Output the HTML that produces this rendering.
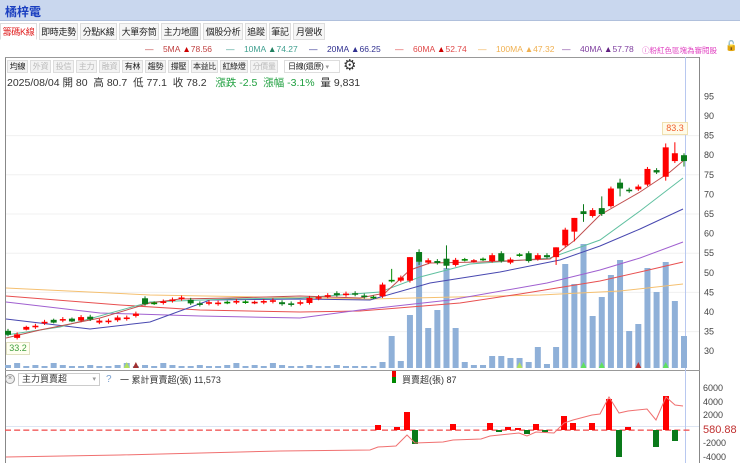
<!DOCTYPE html>
<html><head><meta charset="utf-8"><style>
*{margin:0;padding:0;box-sizing:border-box}
body{width:740px;height:463px;overflow:hidden;background:#fff;font-family:"Liberation Sans","Noto Sans CJK TC",sans-serif;position:relative;color:#333}
.a{position:absolute;white-space:nowrap}
#title{left:0;top:0;width:740px;height:21px;background:#c9d7ee;border-bottom:1px solid #b0c0dc}
#title span{position:absolute;left:5px;top:3px;font-size:12px;font-weight:bold;color:#1a3fc0}
.tab{position:absolute;top:23px;height:17px;font-size:9px;line-height:16px;text-align:center;background:#f6f6f6;border:1px solid #ddd;color:#222;white-space:nowrap;overflow:hidden;letter-spacing:-0.3px}
.btn{position:absolute;top:60px;height:13px;font-size:8px;line-height:11px;text-align:center;background:#f3f3f3;border:1px solid #ddd;color:#222;white-space:nowrap;overflow:hidden;letter-spacing:-0.3px}
.g{color:#bbb}
.leg{position:absolute;top:44px;font-size:8.5px;white-space:nowrap}
svg{position:absolute;left:0;top:0}
</style></head><body>
<div id="title" class="a"><span>橘梓電</span></div>
<div class="tab" style="left:0;width:37px;color:#e02020;background:#fff;border-bottom-color:#fff">籌碼K線</div>
<div class="tab" style="left:39px;width:39px">即時走勢</div>
<div class="tab" style="left:80px;width:37px">分點K線</div>
<div class="tab" style="left:119px;width:40px">大單夯筒</div>
<div class="tab" style="left:161px;width:40px">主力地圖</div>
<div class="tab" style="left:203px;width:40px">個股分析</div>
<div class="tab" style="left:245px;width:22px">追蹤</div>
<div class="tab" style="left:269px;width:22px">筆記</div>
<div class="tab" style="left:293px;width:32px">月營收</div>
<div class="leg" style="left:145px;color:#c04040">—&nbsp;&nbsp;&nbsp; 5MA <span style="color:#c00">▲</span>78.56</div>
<div class="leg" style="left:226px;color:#40a090">—&nbsp;&nbsp;&nbsp; 10MA <span style="color:#208060">▲</span>74.27</div>
<div class="leg" style="left:309px;color:#303090">—&nbsp;&nbsp;&nbsp; 20MA <span>▲</span>66.25</div>
<div class="leg" style="left:395px;color:#e04848">—&nbsp;&nbsp;&nbsp; 60MA <span style="color:#c00">▲</span>52.74</div>
<div class="leg" style="left:478px;color:#f0b050">—&nbsp;&nbsp;&nbsp; 100MA ▲47.32</div>
<div class="leg" style="left:562px;color:#8040a0">—&nbsp;&nbsp;&nbsp; 40MA <span style="color:#602080">▲</span>57.78</div>
<div class="leg" style="left:642px;color:#e040c0;font-size:7.5px;top:45px">ⓘ粉紅色區塊為審閱股</div>
<div class="leg" style="left:725px;top:41px;font-size:10px;color:#000">🔓</div>
<svg width="740" height="463" id="s"></svg>
<div class="btn" style="left:7px;width:21px">均線</div>
<div class="btn g" style="left:30px;width:21px">外資</div>
<div class="btn g" style="left:53px;width:21px">投信</div>
<div class="btn g" style="left:76px;width:21px">主力</div>
<div class="btn g" style="left:99px;width:21px">融資</div>
<div class="btn" style="left:122px;width:21px">有林</div>
<div class="btn" style="left:145px;width:21px">趨勢</div>
<div class="btn" style="left:168px;width:21px">撐壓</div>
<div class="btn" style="left:191px;width:27px">本益比</div>
<div class="btn" style="left:220px;width:28px">紅綠燈</div>
<div class="btn g" style="left:250px;width:28px">分價量</div>
<div class="btn" style="left:284px;width:56px;background:#fff;text-align:left;padding-left:3px">日線(還原) <span style="color:#999;font-size:7px">▾</span></div>
<div class="a" style="left:343px;top:56px;font-size:15px;color:#333">⚙</div>
<div class="a" style="left:7px;top:75px;font-size:10.5px;color:#333">2025/08/04 開 80 &nbsp;高 80.7 &nbsp;低 77.1 &nbsp;收 78.2 &nbsp; <span style="color:#20a040">漲跌 -2.5 &nbsp;漲幅 -3.1%</span> &nbsp;量 9,831</div>
<div class="a" style="left:662px;top:122px;width:26px;height:13px;border:1px solid #f0e0b0;background:#fffbe8;font-size:9px;color:#f06030;text-align:center;line-height:11px">83.3</div>
<div class="a" style="left:6px;top:342px;width:24px;height:13px;border:1px solid #e0e0c0;background:#fffff0;font-size:9px;color:#40a040;text-align:center;line-height:11px">33.2</div>
<div class="a" style="left:5px;top:374px;width:10px;height:10px;border:1px solid #999;border-radius:50%;font-size:7px;line-height:8px;text-align:center;color:#777;background:#eee">×</div>
<div class="a" style="left:18px;top:373px;width:82px;height:13px;border:1px solid #ccc;font-size:9px;line-height:11px;padding-left:3px">主力買賣超<span style="position:absolute;right:3px;color:#999;font-size:7px">▾</span></div>
<div class="a" style="left:106px;top:374px;font-size:10px;color:#7aa0d0">?</div>
<div class="a" style="left:120px;top:373px;font-size:9px">一 累計買賣超(張) 11,573</div>
<div class="a" style="left:392px;top:371px;width:4px;height:6px;background:#e00"></div>
<div class="a" style="left:392px;top:377px;width:4px;height:6px;background:#080"></div>
<div class="a" style="left:402px;top:373px;font-size:9px">買賣超(張) 87</div>
<div class="a" style="left:703px;top:424px;font-size:11px;color:#c03030">580.88</div>
<script>
const s=document.getElementById('s');let h='';
const X=i=>8+i*9.135,Y=p=>116+(90-p)*3.92;
h+='<line x1="5.5" y1="57" x2="5.5" y2="463" stroke="#888"/><line x1="5" y1="57.5" x2="700" y2="57.5" stroke="#999"/><line x1="699.5" y1="57" x2="699.5" y2="463" stroke="#888"/>';
h+='<line x1="5" y1="370.5" x2="700" y2="370.5" stroke="#999"/>';
for(let p=35;p<=85;p+=10)h+=`<line x1="6" x2="699" y1="${Y(p)}" y2="${Y(p)}" stroke="#f0f0f0"/>`;
for(let p=30;p<=95;p+=5)h+=`<text x="704" y="${Y(p)+3}" font-size="9" fill="#444">${p}</text>`;
[[6000,391],[4000,405],[2000,418],[-2000,446],[-4000,460]].forEach(a=>h+=`<text x="703" y="${a[1]}" font-size="9" fill="#444">${a[0]}</text>`);
h+='<line x1="6" x2="699" y1="426.5" y2="426.5" stroke="#dde6f4"/>';
h+='<line x1="685.5" x2="685.5" y1="57" y2="463" stroke="#b8c8f0"/>';
const vr={41:362,42:336,43:361,44:315,45:262,46:328,47:310,48:268,49:328,50:362,51:365,52:365,53:356,54:356,55:358,56:358,57:362,58:347,59:364,60:347,61:264,62:284,63:244,64:316,65:297,66:275,67:260,68:331,69:324,70:268,71:292,72:262,73:301,74:336};
for(let i=0;i<75;i++){let t=vr[i]||(i%3==0?365:i%4==1?363:366);if(i>36&&i<41)t=366;h+=`<rect x="${X(i)-3}" y="${t}" width="6" height="${368-t}" fill="#8fb0d8"/>`;}
[[13,'#b0e060'],[14,'#a03030'],[56,'#b0e060'],[69,'#c03030'],[63,'#60e060'],[65,'#60e060'],[72,'#60e060']].forEach(a=>{const x=X(a[0]);h+=`<polygon points="${x-3},368 ${x+3},368 ${x},362" fill="${a[1]}"/>`});
const ln=(pts,c)=>h+=`<polyline points="${pts}" fill="none" stroke="${c}" stroke-width="1"/>`;
ln('6,288 150,295 370,299 540,295 620,291 683,284','#f5c070');
ln('6,296 120,305 200,310 300,312 360,311 460,303 520,294 600,281 640,272 683,262','#e85050');
ln('6,302 100,313 200,316 300,318 360,310 450,300 547,283 600,270 640,258 683,242','#a060d0');
ln('6,319 90,329 150,322 210,300 300,299 370,300 430,283 500,272 560,260 600,246 640,229 683,209','#4848b0');
ln('6,335 60,327 150,302 230,299 300,298 380,292 420,277 470,264 550,258 600,240 640,211 683,178','#60c0a0');
ln('6,338 40,330 100,318 150,303 180,299 230,298 300,296 360,298 385,293 410,270 430,263 480,262 550,259 575,240 600,215 640,192 670,172 683,161','#c05050');
const C=[[35.2,34.2],[33.4,34.3],[35.7,36],[36.1,36.5],[37.1,37.5],[37.8,37.5],[37.8,38.2],[38.1,37.8],[37.8,38.7],[38.8,38.1],[37.3,37.8],[37.4,37.8],[37.9,38.6],[38.2,38.6],[39,39.6],[43.5,42],[42.2,42.2],[42.3,42.7],[42.8,43.2],[43.3,43.7],[43.1,42.2],[42.2,41.8],[42.1,42.5],[42,42.4],[42.4,42.4],[42.4,42.8],[42.5,42.5],[42.4,42.4],[42.4,42.8],[42.6,43],[42.5,42],[42.2,41.8],[42.1,42.5],[42.3,43.6],[43.4,43.8],[43.9,44.3],[44.8,44.3],[44.3,44.7],[44.8,44.4],[44.2,43.8],[43.7,43.7],[44,47],[48,48],[48,48.8],[48,54],[55.3,52.8],[52.6,53.2],[53,52.5],[53.6,51.8],[52,53.3],[53.3,53.3],[53,53],[53.4,53.4],[53,54.5],[55,53],[52.6,53.4],[54.5,54.5],[55,53],[53.5,54.5],[54.5,54],[54,56.5],[57,61],[60.5,64],[65.5,65.2],[64.5,66],[66.5,65],[67,71.5],[73,71.5],[71.2,70.8],[71.3,72],[72.5,76.5],[76.2,75.6],[74.5,82],[78.5,80.5],[80,78.5]];
const wk={48:[57,51],62:[64,58],63:[67.5,63],65:[69.5,64.5],67:[74,69.5],72:[83,73.5],73:[83.3,78],74:[80.5,77.1],42:[51,47.5],44:[54,47.5],45:[56,52],60:[56.5,52]};
C.forEach((c,i)=>{const [o,cl]=c;const up=cl>o,eq=Math.abs(cl-o)<0.05;const col=eq?(i%2?'#e00':'#080'):(up?'#f00':'#0a7a1a');const hi=(wk[i]||[])[0]||Math.max(o,cl)+0.5,lo=(wk[i]||[])[1]||Math.min(o,cl)-0.4;const x=X(i);
h+=`<line x1="${x}" x2="${x}" y1="${Y(hi)}" y2="${Y(lo)}" stroke="${col}"/>`;
let t=Y(Math.max(o,cl)),b=Y(Math.min(o,cl));if(b-t<1.5){t-=0.8;b+=0.8;}
h+=`<rect x="${x-3}" y="${t}" width="6" height="${b-t}" fill="${col}"/>`});
for(let x=8;x<380;x+=9.135)h+=`<rect x="${x-3}" y="429.5" width="6" height="1.3" fill="#f05050"/>`;
for(let x=385;x<690;x+=9.135)h+=`<rect x="${x-3}" y="429.5" width="6" height="1.3" fill="#f05050"/>`;
[[378,425,430,1],[397,427,430,1],[407,412,430,1],[415,430,444,0],[453,424,430,1],[490,423,430,1],[499,430,432,0],[508,427,430,1],[518,428,430,1],[527,430,434,0],[536,424,430,1],[545,430,432,0],[564,416,430,1],[573,423,430,1],[592,423,430,1],[609,399,430,1],[619,430,457,0],[628,427,430,1],[656,430,447,0],[666,396,430,1],[675,430,441,0]].forEach(b=>h+=`<rect x="${b[0]-3}" y="${b[1]}" width="6" height="${b[2]-b[1]}" fill="${b[3]?'#f00':'#0a7a1a'}"/>`);
ln('6,457 120,455 280,451 370,450 378,447 396,446 407,435 415,443 443,442 453,440 481,439 490,436 519,433 527,436 536,432 554,433 564,423 573,420 592,415 600,414 609,397 619,413 628,411 647,409 656,420 666,397 675,405 683,406','#f07070');
s.innerHTML=h;
</script>
</body></html>
